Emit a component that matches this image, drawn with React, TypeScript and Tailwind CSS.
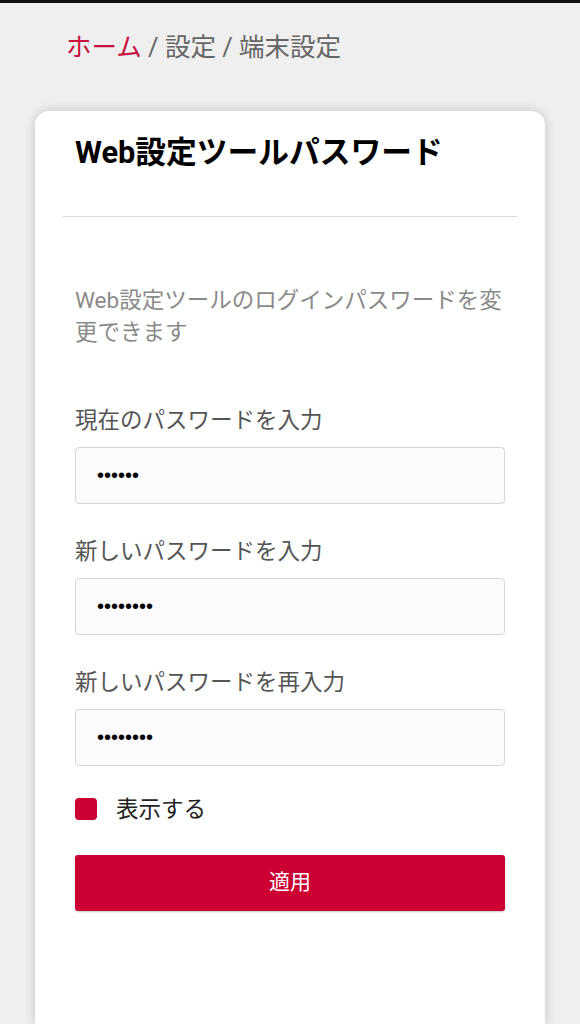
import { useState } from "react";

const font = { fontFamily: 'Roboto, "Noto Sans CJK JP", "Noto Sans", sans-serif' };

function Field({ label, value }: { label: string; value: string }) {
  return (
    <div className="flex flex-col">
      <label className="text-[22.5px] leading-[32px] text-[#555]">{label}</label>
      <input
        type="password"
        defaultValue={value}
        className="mt-[11px] h-[57px] w-full rounded-[4px] border border-[#d4d4dc] bg-[#fbfbfd] px-[21px] text-[20px] text-black outline-none"
        style={{ fontFamily: '"Liberation Sans", sans-serif' }}
      />
    </div>
  );
}

export default function App() {
  const [show, setShow] = useState(true);

  return (
    <div className="min-h-[1024px] bg-[#efefef] border-t-[3px] border-[#111]" style={font}>
      <div className="px-[66px] pt-[26px] text-[25.5px] leading-[36px] text-[#666]">
        <span className="text-[#c8123f]">ホーム</span> / 設定 / 端末設定
      </div>

      <div className="mx-[35px] mt-[46px] min-h-[913px] rounded-t-[14px] bg-white shadow-[0_0_12px_rgba(0,0,0,0.18)]">
        <div className="px-[40px] pt-[21px] text-[30.75px] font-bold leading-[42px] text-black">
          Web設定ツールパスワード
        </div>
        <div className="mx-[28px] mt-[42px] h-px bg-[#d8d8d8]" />

        <div className="flex flex-col px-[40px] pt-[67px]">
          <p className="text-[22.5px] leading-[32px] text-[#8a8a8a]">
            Web設定ツールのログインパスワードを変更できます
          </p>

          <div className="mt-[56px] flex flex-col gap-[31px]">
            <Field label="現在のパスワードを入力" value="passwd" />
            <Field label="新しいパスワードを入力" value="password" />
            <Field label="新しいパスワードを再入力" value="password" />
          </div>

          <label className="mt-[27px] flex items-center gap-[19px] cursor-pointer">
            <span
              onClick={() => setShow(!show)}
              className={
                show
                  ? "h-[22px] w-[22px] rounded-[4px] bg-[#cc0033]"
                  : "h-[22px] w-[22px] rounded-[4px] border border-[#999] bg-white"
              }
            />
            <span className="text-[22.5px] leading-[32px] text-[#222]">表示する</span>
          </label>

          <button className="mt-[30px] h-[56px] w-full rounded-[3px] bg-[#cc0033] text-[21px] text-white shadow-[0_1px_2px_rgba(0,0,0,0.2)]">
            適用
          </button>
        </div>
      </div>
    </div>
  );
}
